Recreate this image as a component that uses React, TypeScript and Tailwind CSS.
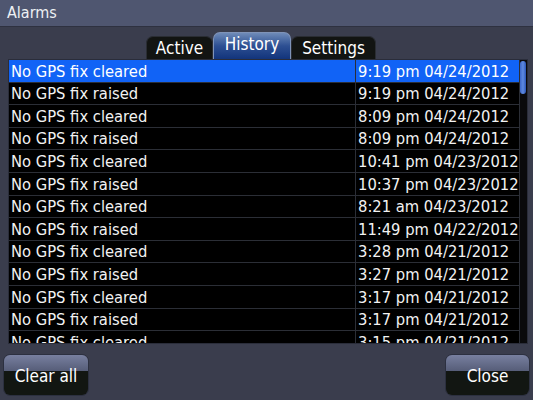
const ROWS: [string, string][] = [
  ['No GPS fix cleared', '9:19 pm 04/24/2012'],
  ['No GPS fix raised', '9:19 pm 04/24/2012'],
  ['No GPS fix cleared', '8:09 pm 04/24/2012'],
  ['No GPS fix raised', '8:09 pm 04/24/2012'],
  ['No GPS fix cleared', '10:41 pm 04/23/2012'],
  ['No GPS fix raised', '10:37 pm 04/23/2012'],
  ['No GPS fix cleared', '8:21 am 04/23/2012'],
  ['No GPS fix raised', '11:49 pm 04/22/2012'],
  ['No GPS fix cleared', '3:28 pm 04/21/2012'],
  ['No GPS fix raised', '3:27 pm 04/21/2012'],
  ['No GPS fix cleared', '3:17 pm 04/21/2012'],
  ['No GPS fix raised', '3:17 pm 04/21/2012'],
  ['No GPS fix cleared', '3:15 pm 04/21/2012'],
];

function Tab({ label, active, w }: { label: string; active?: boolean; w: string }) {
  return (
    <div
      className={`${w} rounded-t-[7px] flex items-center justify-center text-[17px] text-white whitespace-nowrap ${
        active
          ? 'bg-gradient-to-b from-[#6f8bb8] via-[#2d4f92] to-[#12347c] h-[27px] pb-[3px] border border-[#7f93b8] border-b-0'
          : 'bg-[#121412] h-[23px] pt-[2px] border border-[#2a2d33] border-b-0'
      }`}
    >
      {label}
    </div>
  );
}

function Button({ label, w }: { label: string; w: string }) {
  return (
    <div className={`${w} h-[42px] rounded-[7px] overflow-hidden flex flex-col border border-[#2c3040] relative`}>
      <div className="h-[16px] bg-gradient-to-b from-[#7880a0] to-[#565d78]" />
      <div className="flex-1 bg-[#121612]" />
      <div className="absolute inset-0 flex items-center justify-center text-[17px] text-white pt-[3px] whitespace-nowrap">
        {label}
      </div>
    </div>
  );
}

export default function App() {
  return (
    <div
      className="w-[533px] h-[400px] bg-[#3a3d4d] flex flex-col overflow-hidden"
      style={{ fontFamily: '"DejaVu Sans Condensed", "DejaVu Sans", sans-serif' }}
    >
      {/* Title bar */}
      <div className="h-[27px] bg-[#4f5670] border-b border-[#2e3140] flex items-center px-[7px] text-[16px] text-[#eef0f4]">
        Alarms
      </div>

      {/* Tabs */}
      <div className="h-[32px] flex items-end justify-center pr-[11px]">
        <Tab label="Active" w="w-[67px]" />
        <Tab label="History" w="w-[78px]" active />
        <Tab label="Settings" w="w-[85px]" />
      </div>

      {/* Table */}
      <div className="mx-[8px] w-[520px] h-[285px] bg-black border border-[#2a2d3a] flex overflow-hidden">
        <div className="flex-1 flex flex-col">
          {ROWS.map(([msg, time], i) => (
            <div
              key={i}
              className={`h-[22.6px] shrink-0 flex text-[16.4px] leading-none whitespace-nowrap border-b border-[#2b2e36] ${
                i === 0 ? 'bg-[#1163f6] text-white' : 'text-[#f2f2f2]'
              }`}
            >
              <div className="w-[346px] pl-[2px] flex items-center pt-[2px]">{msg}</div>
              <div className="flex-1 pl-[2px] flex items-center border-l border-[#2b2e36] pt-[2px] overflow-hidden">
                {time}
              </div>
            </div>
          ))}
        </div>
        <div className="w-[10px] bg-[#0a0a0c] border-l border-[#2b2e36] flex justify-center pt-[1px]">
          <div className="w-[6px] h-[33px] rounded-[3px] bg-gradient-to-r from-[#3c66c8] via-[#5f8ae0] to-[#2c56b8]" />
        </div>
      </div>

      {/* Buttons */}
      <div className="flex justify-between px-[3px] mt-[10px]">
        <Button label="Clear all" w="w-[86px]" />
        <Button label="Close" w="w-[85px]" />
      </div>
    </div>
  );
}
